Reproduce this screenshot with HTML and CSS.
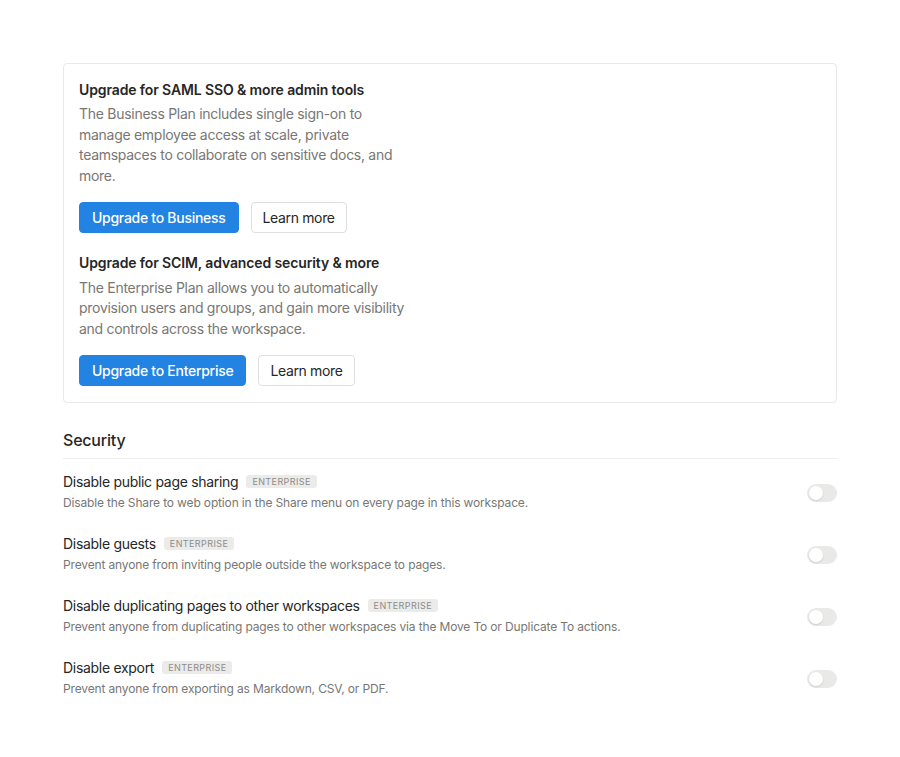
FILE: index.html
```html
<!DOCTYPE html>
<html lang="en">
<head>
<meta charset="utf-8">
<title>Security settings</title>
<link rel="stylesheet" href="styles.css">
</head>
<body>
<main class="page">
  <section class="card">
    <div class="plan">
      <h3 class="plan-title">Upgrade for SAML SSO &amp; more admin tools</h3>
      <p class="plan-text">The Business Plan includes single sign-on to manage employee access at scale, private teamspaces to collaborate on sensitive docs, and more.</p>
      <div class="actions">
        <button class="btn btn-primary">Upgrade to Business</button>
        <button class="btn btn-secondary">Learn more</button>
      </div>
    </div>
    <div class="plan plan-second">
      <h3 class="plan-title">Upgrade for SCIM, advanced security &amp; more</h3>
      <p class="plan-text">The Enterprise Plan allows you to automatically provision users and groups, and gain more visibility and controls across the workspace.</p>
      <div class="actions">
        <button class="btn btn-primary">Upgrade to Enterprise</button>
        <button class="btn btn-secondary">Learn more</button>
      </div>
    </div>
  </section>

  <h2 class="section-title">Security</h2>

  <div class="settings">
    <div class="row">
      <div class="row-text">
        <div class="row-title">Disable public page sharing <span class="badge">Enterprise</span></div>
        <div class="row-desc">Disable the Share to web option in the Share menu on every page in this workspace.</div>
      </div>
      <span class="toggle"><span class="knob"></span></span>
    </div>
    <div class="row">
      <div class="row-text">
        <div class="row-title">Disable guests <span class="badge">Enterprise</span></div>
        <div class="row-desc">Prevent anyone from inviting people outside the workspace to pages.</div>
      </div>
      <span class="toggle"><span class="knob"></span></span>
    </div>
    <div class="row">
      <div class="row-text">
        <div class="row-title">Disable duplicating pages to other workspaces <span class="badge">Enterprise</span></div>
        <div class="row-desc">Prevent anyone from duplicating pages to other workspaces via the Move To or Duplicate To actions.</div>
      </div>
      <span class="toggle"><span class="knob"></span></span>
    </div>
    <div class="row">
      <div class="row-text">
        <div class="row-title">Disable export <span class="badge">Enterprise</span></div>
        <div class="row-desc">Prevent anyone from exporting as Markdown, CSV, or PDF.</div>
      </div>
      <span class="toggle"><span class="knob"></span></span>
    </div>
  </div>
</main>
</body>
</html>
```

FILE: styles.css
```css
* { box-sizing: border-box; }

html, body {
  margin: 0;
  padding: 0;
  background: #ffffff;
}

body {
  font-family: Inter, "Noto Sans", "Liberation Sans", sans-serif;
  color: #262626;
  -webkit-font-smoothing: antialiased;
}

.page {
  width: 900px;
  padding: 63px 63px 40px;
}

.card {
  border: 1px solid #e9e9e7;
  border-radius: 4px;
  padding: 15px 15px 16px;
  display: flex;
  flex-direction: column;
  gap: 19px;
}

.plan-title {
  margin: 0;
  font-size: 14px;
  line-height: 20px;
  font-weight: 600;
  letter-spacing: -0.12px;
  color: #262626;
  padding-top: 1px;
}

.plan-text {
  margin: 4px 0 0;
  max-width: 330px;
  font-size: 14px;
  line-height: 20.67px;
  letter-spacing: -0.28px;
  color: #787774;
}

.plan-second .plan-text {
  margin-top: 5px;
}

.actions {
  display: flex;
  gap: 12px;
  margin-top: 15px;
}

.btn {
  height: 31px;
  padding: 0 12px;
  border-radius: 4px;
  font-family: inherit;
  font-size: 14px;
  font-weight: 500;
  line-height: 29px;
  letter-spacing: -0.28px;
  cursor: pointer;
}

.btn-primary {
  background: #2383e2;
  color: #ffffff;
  border: 1px solid #2383e2;
}

.btn-secondary {
  background: #ffffff;
  color: #262626;
  border: 1px solid #dfdfde;
  font-weight: 400;
  padding: 0 11px;
  letter-spacing: -0.35px;
}

.section-title {
  margin: 25px 0 0;
  padding-bottom: 6px;
  border-bottom: 1px solid #ededec;
  font-size: 16px;
  line-height: 24px;
  font-weight: 500;
  letter-spacing: -0.2px;
  color: #262626;
}

.settings {
  display: flex;
  flex-direction: column;
  gap: 23px;
  padding-top: 13px;
}

.row {
  display: flex;
  align-items: center;
  justify-content: space-between;
  gap: 16px;
}

.row-title {
  display: flex;
  align-items: center;
  font-size: 14px;
  line-height: 20px;
  letter-spacing: -0.3px;
  color: #262626;
}

.badge {
  margin-left: 8px;
  padding: 0 6px;
  height: 13px;
  line-height: 13px;
  border-radius: 3px;
  background: #ebebea;
  color: #8e8d89;
  font-size: 9px;
  font-weight: 400;
  letter-spacing: 0.4px;
  text-transform: uppercase;
}

.row-desc {
  margin-top: 3px;
  font-size: 12px;
  line-height: 16px;
  letter-spacing: -0.15px;
  color: #787774;
}

.toggle {
  flex: none;
  width: 30px;
  height: 18px;
  margin-top: 4px;
  border-radius: 9px;
  background: #e9e9e8;
  padding: 2px;
  display: flex;
  align-items: center;
}

.knob {
  width: 14px;
  height: 14px;
  border-radius: 50%;
  background: #ffffff;
  box-shadow: 0 1px 2px rgba(15, 15, 15, 0.12);
}
```
